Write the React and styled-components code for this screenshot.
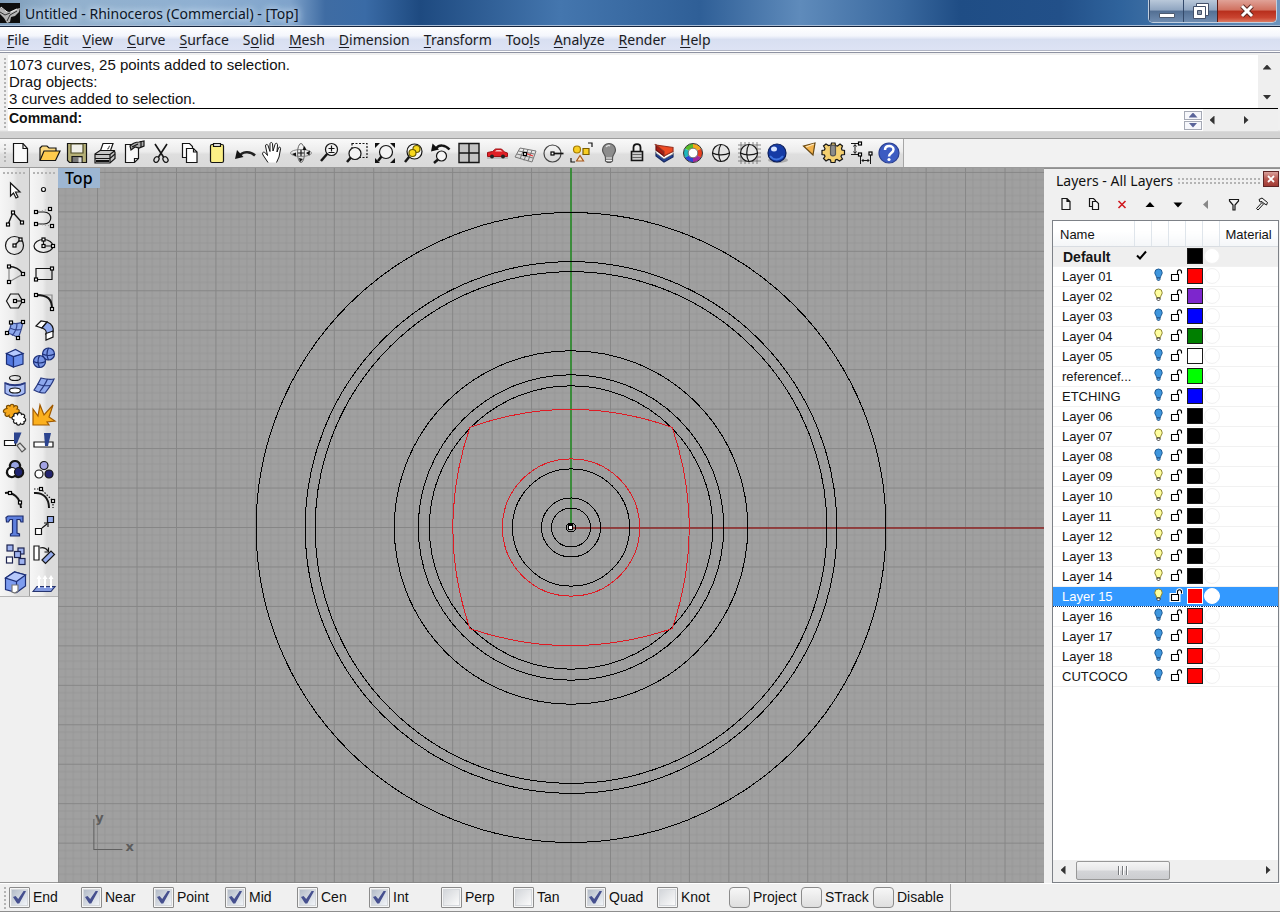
import React from "react"
import styled, { createGlobalStyle, css } from "styled-components";

const GlobalStyle = createGlobalStyle`
  * { box-sizing: border-box; }
  body {
    margin: 0;
    background: #f0f0f0;
    color: #111;
    font-family: "Liberation Sans", Arial, sans-serif;
    font-size: 14px;
  }
  button, input { font: inherit; color: inherit; }
  svg { display: block; }
`;

const ui = '"Noto Sans", "Segoe UI", sans-serif';

const Window = styled.div`
  display: flex;
  flex-direction: column;
  height: 100vh;
  min-height: 700px;
  overflow: hidden;
  border-bottom: 1px solid #8e8e8e;
`;

const TitleBar = styled.header`
  display: flex;
  align-items: flex-start;
  height: 27px;
  flex: none;
  padding-right: 3px;
  border-bottom: 1px solid #14233c;
  box-shadow: inset 0 -1px 0 #a9bdd6;
  background: linear-gradient(90deg, #7e9cb9 0, #93b1cd 60px, #8fb0d2 200px, #7fa3cb 290px, #3f6ca3 325px, #3a6ba6 365px, #1e4a80 420px, #4476ae 560px, #2f5f97 700px, #5f8bbb 800px, #3a699f 900px, #1f4d85 960px, #225089 1060px, #2f639c 1120px, #6d94bd 100%);
`;

const Title = styled.h1`
  margin: 0 0 0 5px;
  font: 400 14px/27px ${ui};
  color: #0b1526;
  text-shadow: 0 0 6px #dceaf7, 0 0 8px #c8dcf0;
`;

const WindowButtons = styled.div`
  display: flex;
  margin-left: auto;
  height: 23px;
  border: 1px solid #c2cfdf;
  border-top: 0;
  border-radius: 0 0 5px 5px;
  overflow: hidden;
`;

const WindowButton = styled.button`
  width: ${p => (p.$close ? 59 : 34)}px;
  padding: 0;
  border: 0;
  border-left: 1px solid ${p => (p.$close ? "#5b1a14" : "#33496a")};
  display: grid;
  place-items: center;
  background: ${p => p.$close
    ? "linear-gradient(#e0a297, #d0705f 46%, #b82e1c 50%, #c94430 80%, #dd7a62)"
    : "linear-gradient(#b9c8da, #8fa5c0 46%, #536f93 50%, #6f8cb0)"};
`;

const MenuBar = styled.nav`
  display: flex;
  gap: 14px;
  height: 26px;
  flex: none;
  padding-left: 7px;
  background: linear-gradient(#fff, #f4f6fc 35%, #d8dff1 50%, #dde3f4 90%, #e6ebf7);
  border-bottom: 1px solid #8f93a3;
  box-shadow: inset 0 -1px 0 #fff, inset 0 -2px 0 #b1b5c4;
`;

const MenuItem = styled.button`
  padding: 0;
  border: 0;
  background: none;
  font: 400 14px/24px ${ui};
  color: #1b1b22;
  u { text-underline-offset: 2px; }
`;

const CommandArea = styled.section`
  display: grid;
  grid-template-columns: 8px 1fr 22px;
  grid-template-rows: 53px 23px;
  flex: none;
  height: 86px;
  padding-top: 2px;
  background: linear-gradient(#f0f0f0 77px, #d3d3d3 79px);
  border-bottom: 1px solid #9c9c9c;
`;

const grip = css`
  background-image: radial-gradient(circle, #b4b4b4 0 1px, transparent 1px);
  background-size: 4px 4px;
`;

const SideGrip = styled.div`
  ${grip}
  width: 4px;
  margin: 2px 1px 2px 3px;
  align-self: stretch;
  ${p => p.$tall && "grid-row: 1 / 3;"}
`;

const History = styled.div`
  padding: 1px;
  background: #fff;
  font-size: 15px;
  line-height: 17px;
  overflow: hidden;
`;

const HistoryScroll = styled.div`
  display: flex;
  flex-direction: column;
  justify-content: space-between;
  padding: 6px 2px 5px 0;
  background: #efefef;
`;

const Arrow = styled.button`
  width: ${p => p.$w || 18}px;
  height: ${p => p.$h || 12}px;
  padding: 0;
  border: 0;
  background: none;
  display: grid;
  place-items: center;
  color: #333;
  &::before {
    content: "";
    width: ${p => (p.$dir === "up" || p.$dir === "down" ? 9 : 5)}px;
    height: ${p => (p.$dir === "up" || p.$dir === "down" ? 5 : 9)}px;
    background: currentColor;
    clip-path: ${p => ({
      up: "polygon(50% 0, 100% 100%, 0 100%)",
      down: "polygon(0 0, 100% 0, 50% 100%)",
      left: "polygon(100% 0, 100% 100%, 0 50%)",
      right: "polygon(0 0, 100% 50%, 0 100%)",
    }[p.$dir])};
  }
`;

const CommandLine = styled.div`
  grid-column: 2 / 4;
  display: flex;
  border-top: 1px solid #000;
  background: #fff;
  margin-right: 2px;
  label {
    padding: 0 4px 0 1px;
    font-weight: 700;
    line-height: 19px;
  }
  input {
    flex: 1;
    min-width: 0;
    border: 0;
    outline: 0;
    background: none;
  }
`;

const Spinner = styled.div`
  display: grid;
  align-content: center;
  gap: 1px;
  padding-right: 1px;
  ${Arrow} {
    border: 1px solid #a5a9b5;
    background: #f6f7fb;
    color: #5a649a;
  }
`;

const CommandScroll = styled.div`
  display: flex;
  align-items: center;
  gap: 16px;
  width: 75px;
  background: #efefef;
`;

const ToolRow = styled.div`
  display: flex;
  flex: none;
  height: 29px;
  background: #f2f2f2;
  border-bottom: 1px solid #9b9b9b;
`;

const Toolbar = styled.div`
  display: flex;
  border-right: 1px solid #a6a6a6;
  background: linear-gradient(#f9f9f9, #ececec 45%, #dedede 55%, #dadada);
`;

const ToolGrip = styled.div`
  ${grip}
  width: 4px;
  margin: 4px 0 3px 3px;
`;

const ToolButton = styled.button`
  width: 28px;
  height: 28px;
  padding: 0;
  border: 0;
  background: none;
  &:hover { background: #fff8; }
`;

const Workspace = styled.main`
  display: grid;
  grid-template-columns: 58px minmax(0, 1fr) 236px;
  flex: 1;
  min-height: 0;
`;

const Sidebar = styled.aside`
  border-bottom: 1px solid #999;
`;

const Palette = styled.div`
  display: grid;
  grid-template-columns: 30px 28px;
  border-bottom: 1px solid #b5b5b5;
`;

const PaletteColumn = styled.div`
  display: flex;
  flex-direction: column;
  align-items: center;
  border-right: ${p => (p.$first ? "1px solid #9d9d9d" : "0")};
  background: linear-gradient(90deg, #f6f6f6, #ececec 45%, #dcdcdc 60%, #dcdcdc);
`;

const TopGrip = styled.div`
  ${grip}
  align-self: stretch;
  height: 4px;
  margin: 3px 2px 1px;
`;

const Viewport = styled.section`
  position: relative;
  min-height: 0;
  overflow: hidden;
  background: #a0a0a0;
`;

const ViewportTitle = styled.h2`
  position: absolute;
  top: 0;
  left: 0;
  margin: 0;
  padding: 0 7px;
  font: 500 16px/20px ${ui};
  color: #000;
  background: #9db6d2;
`;

const Drawing = styled.svg`
  position: absolute;
  inset: 0;
  width: 100%;
  height: 100%;
  text { font: 700 13px "DejaVu Sans", sans-serif; fill: #5c5c5c; }
`;

const LayersPanel = styled.aside`
  display: flex;
  flex-direction: column;
  min-height: 0;
  padding: 2px 1px 0 8px;
  border-top: 1px solid #909090;
`;

const PanelHead = styled.div`
  display: flex;
  align-items: center;
  height: 19px;
  flex: none;
  h2 {
    margin: 0 4px;
    font: 400 14px/20px ${ui};
    white-space: nowrap;
  }
`;

const PanelGrip = styled.div`
  ${grip}
  flex: 1;
  height: 8px;
`;

const CloseButton = styled.button`
  display: grid;
  place-items: center;
  width: 16px;
  height: 16px;
  margin: 0 0 3px 2px;
  padding: 0;
  border: 1px solid #5e2424;
  background: linear-gradient(#d9a09b, #b85850 50%, #a03a34);
`;

const PanelTools = styled.div`
  display: flex;
  height: 30px;
  flex: none;
`;

const LayerList = styled.div`
  display: flex;
  flex-direction: column;
  flex: 1;
  min-height: 0;
  border: 1px solid #7d8187;
  background: #fff;
`;

const LayerTable = styled.table`
  width: 100%;
  table-layout: fixed;
  border-collapse: collapse;
  font-size: 13px;
  th {
    height: 25px;
    padding: 2px 0 0 7px;
    font-weight: 400;
    text-align: left;
    border-right: 1px solid #dfe5eb;
    border-bottom: 1px solid #d9dde2;
    background: linear-gradient(#fff 40%, #f4f6f8);
  }
  th:last-child { border-right: 0; padding-left: 6px; }
`;

const LayerRow = styled.tr`
  height: 20px;
  background: ${p => (p.$selected ? "#3399ff" : p.$current ? "#efefef" : "#fff")};
  color: ${p => (p.$selected ? "#fff" : "#151515")};
  td {
    height: 20px;
    padding: 0;
    border-bottom: 1px ${p => (p.$selected ? "dotted #10305c" : "solid #f1f1f1")};
  }
`;

const LayerName = styled.td`
  && {
    padding: 1px 0 0 ${p => (p.$bold ? 10 : 9)}px;
    font-size: ${p => (p.$bold ? 14 : 13)}px;
    font-weight: ${p => (p.$bold ? 700 : 400)};
    overflow: hidden;
    white-space: nowrap;
  }
`;

const Swatch = styled.span`
  display: block;
  width: 16px;
  height: 16px;
  margin-left: 2px;
  border: 1px solid ${p => (p.$selected ? "#fff" : "#1a1a1a")};
  background: ${p => p.$color};
`;

const MaterialDot = styled.span`
  display: block;
  width: 16px;
  height: 16px;
  margin-left: 2px;
  border: 1px solid ${p => (p.$selected ? "#fff" : "#f1f1f1")};
  border-radius: 50%;
  background: #fff;
`;

const HScroll = styled.div`
  display: flex;
  align-items: center;
  height: 22px;
  flex: none;
  margin-top: auto;
  padding: 0 1px 2px;
  background: #efefef;
`;

const Thumb = styled.div`
  display: flex;
  justify-content: center;
  align-items: center;
  gap: 2px;
  width: 94px;
  height: 19px;
  margin: 0 auto 0 4px;
  border: 1px solid #989898;
  border-radius: 2px;
  background: linear-gradient(#f5f5f5, #e8e8e9 48%, #d4d5d8 52%, #cccdd0);
  i {
    width: 2px;
    height: 9px;
    background: #77797d;
    border-right: 1px solid #fff;
  }
`;

const SnapBar = styled.footer`
  display: flex;
  height: 28px;
  flex: none;
  border-top: 1px solid #fff;
  background: #f0f0f0;
`;

const SnapGroup = styled.div`
  display: flex;
  padding: 0 5px 0 1px;
  border-right: 1px solid #a6a6a6;
`;

const Snap = styled.label`
  display: flex;
  align-items: center;
  gap: 3px;
  width: 72px;
  padding-bottom: 1px;
  white-space: nowrap;
`;

const SnapBox = styled.input`
  appearance: none;
  flex: none;
  display: grid;
  place-items: center;
  width: 21px;
  height: 21px;
  margin: 0;
  border: 1px solid #8b8b8b;
  border-radius: ${p => (p.$soft ? 4 : 1)}px;
  background: ${p => (p.$soft ? "linear-gradient(#f7f7f7, #dedede)" : "#f6f6f6")};
  &::before {
    content: "";
    grid-area: 1 / 1;
    width: 15px;
    height: 15px;
    border: 1px solid ${p => (p.$soft ? "transparent" : "#d5d8dc")};
    background: ${p => (p.$soft ? "none" : "linear-gradient(135deg, #d3d6da, #fbfbfb)")};
  }
  &:checked::before { background: linear-gradient(135deg, #b4bcc8, #f1f4f8); }
  &:checked::after {
    content: "";
    grid-area: 1 / 1;
    width: 13px;
    height: 13px;
    background: #46508f;
    clip-path: polygon(0 50%, 20% 42%, 40% 66%, 84% 0, 100% 6%, 48% 100%, 32% 100%);
  }
`;

const Icon = ({ children, size = 28 }) => (
  <svg width={size} height={size} viewBox={`0 0 ${size} ${size}`} fill="none" stroke="#151515" strokeWidth="1.2" aria-hidden="true">
    {children}
  </svg>
)

// little white handle used on most curve tools
const Pt = ({ x, y }) => <rect x={x - 1.5} y={y - 1.5} width="3" height="3" fill="#fff" stroke="#000" strokeWidth="1.2" />

const Lens = ({ x, y, r = 6, to = [6, 22], fill = "#f4f4f4" }) => (
  <>
    <path d={`M${x - r * 0.7} ${y + r * 0.7}L${to[0]} ${to[1]}`} strokeWidth="2.5" />
    <circle cx={x} cy={y} r={r} fill={fill} />
  </>
)

const topTools = [
  ["New", <><path d="M6.500 4.500H16l4.500 5V23.500H6.500z" fill="#fafafa" /><path d="M16 4.500v5h4.500" /></>],
  ["Open", <><path d="M5 21V9l2-2h5l2 2h7v4" fill="#fbd981" /><path d="M5 21.500l4-9.500h16l-4.500 9.500z" fill="#ffcb4d" /></>],
  ["Save", <><path d="M4.500 4.500h19v19H6.500l-2-2z" fill="#b5b077" /><path d="M8 5h12v9H8z" fill="#efefe8" stroke="#4f4c28" /><path d="M9 17.500h10v6H9z" fill="#777" /><path d="M15.500 18.500h3v5h-3z" fill="#ddd" stroke="none" /></>],
  ["Print", <><path d="M9 13l3-8.500h10L19 13z" fill="#fff" /><path d="M16 10c3 0 1-3 3-3" stroke="#555" /><path d="M4 15l5-3.500h14l1 2v6L19 24H4z" fill="#c6c6c6" /><path d="M4 15.500h15v8M19 15.500l5-4M4 19.500h15l5-4.500" /><path d="M5 22h13" stroke="#111" strokeWidth="2" /></>],
  ["Properties", <><path d="M6.500 5.500h13v14l-4 4h-9z" fill="#f7f7f7" /><path d="M19.500 19.500h-4v4" /><path d="M11 7c3-3 6-4 9-4l5-1v5l-5 2-4-1-4 3z" fill="#aaa" /><path d="M13 8l6-3M22 2v6" /></>],
  ["Cut", <><path d="M8 5l8.500 13M20 5l-8.500 13" strokeWidth="1.600" /><ellipse cx="9.500" cy="20.500" rx="2.300" ry="3" transform="rotate(35 9.500 20.500)" /><ellipse cx="18.500" cy="20.500" rx="2.300" ry="3" transform="rotate(-35 18.500 20.500)" /></>],
  ["Copy", <><path d="M7.500 4.500h7l3 3V18.500H7.500z" fill="#fff" /><path d="M11.500 9.500h7l3.500 3.500v10.500H11.500z" fill="#fff" /><path d="M18.500 9.500V13H22" /></>],
  ["Paste", <><rect x="7.500" y="5.500" width="13" height="18" rx="1.500" fill="#fbef86" /><path d="M10.500 7.500v-3h7v3z" fill="#ddd" /></>],
  ["Undo", <><path d="M8 17.500c3-5 11-6 16-1" stroke="#222" strokeWidth="2.500" /><path d="M4 20l2-9 6.500 7z" fill="#151515" stroke="none" /></>],
  ["Pan", <path d="M9 23.500L4 16c-1.500-3 1-3.500 2.500-2l2 2.500L6.500 7c0-2 2-2 2.500-.5l2 6V5c0-2 2.500-2 2.500 0l.500 7L16 5.500c.5-2 2.500-1.500 2.500.5l-.5 7 1.500-4c.5-1.500 2.500-1 2 1L20 18l-2.500 5.500" fill="#fff" strokeWidth="1" />],
  ["Rotate view", <><ellipse cx="14" cy="14" rx="10.500" ry="3.500" stroke="#888" strokeWidth="1" /><ellipse cx="14" cy="14" rx="3.500" ry="9.500" stroke="#666" strokeWidth="1" /><path d="M14 11v6M11 14h6" /><path d="M17.500 7l2 4h-4zM13 23l3-3-4-1zM19 14l4-2.500-.5 5zM9 17.500l-4-2.500 4-1.500z" fill="#111" stroke="none" /></>],
  ["Zoom", <><Lens x={16.500} y={10.500} /><path d="M13.500 9.500h6M16.500 6.500v6M13.500 13.500h6" /></>],
  ["Zoom window", <><path d="M9 4.500h15v14H9z" strokeDasharray="2 1.500" /><Lens x={12} y={14.500} to={[4, 23]} /></>],
  ["Zoom extents", <><Lens x={15} y={13} r={6.500} to={[7, 22]} /><path d="M4 4h5L4 9zM24 4v5l-5-5zM4 24v-5l5 5zM24 24h-5l5-5z" fill="#111" stroke="none" /></>],
  ["Zoom selected", <><Lens x={15.500} y={12.500} r={7.500} to={[6, 23]} /><circle cx="17.500" cy="10" r="3.500" fill="#f8d91d" stroke="#6b5c00" /><circle cx="13.500" cy="14" r="3.500" fill="#f8d91d" stroke="#6b5c00" /></>],
  ["Undo view", <><Lens x={14.500} y={17} r={5} to={[7, 24]} /><path d="M9 9.500c3-4 9-4 13.500 1" strokeWidth="2.500" /><path d="M4 12.500l1.500-8 6.500 6z" fill="#111" stroke="none" /></>],
  ["Four viewports", <><path d="M4 4.500h20v19H4z" fill="#c3c3c3" strokeWidth="1.400" /><path d="M14 4.500v19M4 14h20" strokeWidth="1.400" /></>],
  ["Set view", <><path d="M4 19h21" stroke="#aaa" /><path d="M4.500 17.500v-4l5-1 3-2.500h6l3 3 3 1v3.500z" fill="#e12026" stroke="#9d1015" strokeWidth="1" /><path d="M12 12.500l1.500-1.500h4l2 1.500z" fill="#f8c8c8" stroke="none" /><circle cx="9" cy="17.500" r="2" fill="#222" stroke="none" /><circle cx="20" cy="17.500" r="2" fill="#222" stroke="none" /></>],
  ["Construction plane", <><path d="M9 9l16 3-4 11-17-5zM13 9.800L9 20M17 10.500l-4 11M21 11.300l-4 10.900M7.500 12l16 3M6 15l16 4" stroke="#777" strokeWidth="1" /><path d="M14 14l8 3" stroke="#e33" /><Pt x={14} y={15} /></>],
  ["Object snap", <><circle cx="13.500" cy="14.500" r="8.500" stroke="#444" /><path d="M14 14.500h10.500" strokeWidth="1.700" /><Pt x={13.500} y={14.500} /></>],
  ["Select", <><circle cx="10" cy="10.500" r="3.500" fill="#f8ce22" stroke="#a47b00" /><path d="M16 9.500h6v6h-6z" fill="#f8ce22" stroke="#7a5c00" /><path d="M13 16.500l3.500 5.500h-7z" fill="#fbe3b8" stroke="#a5571d" /><path d="M21 4h4v4M4 19v4h4" /></>],
  ["Hide", <><path d="M14 4.500a6.500 6.500 0 0 1 6.500 6.500c0 3.500-3 4.500-3 8v3l-2 1.500h-3l-2-1.500v-3c0-3.500-3-4.500-3-8A6.500 6.500 0 0 1 14 4.500z" fill="#8d8d8d" stroke="#555" /><path d="M11 19h6M11 21.500h6" stroke="#eee" /><path d="M11 8c1-1.500 3-2 4-1" stroke="#ddd" /></>],
  ["Lock", <><path d="M10.500 13V8.500c0-4.500 7-4.500 7 0V13" strokeWidth="1.800" /><path d="M8.500 12.500h11v9h-11z" fill="#ccc" strokeWidth="1.600" /><path d="M9 15.500h10M9 18.500h10" stroke="#666" /></>],
  ["Layers", <><path d="M5 14l8 6 9-5v3l-9 5-8-6z" fill="#24449c" stroke="#182a60" /><path d="M5 11l8 6 9-5v3l-9 5-8-6z" fill="#fff" stroke="#888" strokeWidth=".8" /><path d="M5 6l8 6.500V17l-8-6z" fill="#a81c12" stroke="#611" /><path d="M5 6l17 2.500v4L13 17v-4.500z" fill="#ee4a22" stroke="#932" /></>],
  ["Object colour", <g strokeWidth="4.500"><path d="M14 7a7 7 0 0 1 6.100 3.500" stroke="#f4a71b" /><path d="M20.100 10.500a7 7 0 0 1 0 7" stroke="#e8401f" /><path d="M20.100 17.500A7 7 0 0 1 14 21" stroke="#a3289c" /><path d="M14 21a7 7 0 0 1-6.100-3.500" stroke="#2d48d4" /><path d="M7.900 17.500a7 7 0 0 1 0-7" stroke="#1eb7bd" /><path d="M7.900 10.500A7 7 0 0 1 14 7" stroke="#56bd2b" /><circle cx="14" cy="14" r="9.500" stroke="#333" strokeWidth="1" /><circle cx="14" cy="14" r="4.800" fill="#fff" stroke="#555" strokeWidth=".8" /></g>],
  ["Shade", <><circle cx="14" cy="14" r="8.500" fill="#e4e4e4" /><path d="M14 5.500c-3 4-3 13 0 17M5.500 14c4 2.500 13 2.500 17 0" /></>],
  ["Shade all", <><path d="M3 6h23M3 10h23M3 14h23M3 18h23M3 22h23M6 3v22M10 3v22M14 3v22M18 3v22M22 3v22" stroke="#6a6a6a" strokeWidth=".8" /><circle cx="14" cy="14" r="8.500" fill="#e4e4e4" /><path d="M14 5.500c-3 4-3 13 0 17M5.500 14c4 2.500 13 2.500 17 0" /></>],
  ["Render", <><ellipse cx="15" cy="21" rx="10" ry="3" fill="#aaa" stroke="none" /><circle cx="14" cy="14" r="9" fill="#153ba5" stroke="#0b1d5a" /><path d="M7 17c3 4 9 5 13 0" stroke="#3e74e0" strokeWidth="2" /><ellipse cx="11" cy="10" rx="3" ry="2.500" fill="#d7e4ff" stroke="none" /></>],
  ["Spotlight", <><path d="M12.500 7l11.500-3-2 12z" fill="#f3b34d" stroke="#6a4a14" /><path d="M15 8l8-3" stroke="#fde8bd" /></>],
  ["Options", <><path d="M12 6l.5-2h3.500l.5 2.500 2 .5 2.500-2 2.500 2-1 2.500.5 1.500 2.500.5v4l-3 .5-.5 1.500 1.500 2.500-3 2-2.500-1.500-1.500.5-.5 2.500h-4l-.5-2.500-2-.5-2.500 1.500-2.500-2.500 1.500-2-.5-1.500-2.500-.5v-4l2.500-.5.5-1.500-1.500-2.500 2.500-2 2.500 1.500z" fill="#f4d070" /><path d="M11.500 8c0-2.500 5-2.500 5 0v7c0 2.500-5 2.500-5 0z" fill="#8c8c8c" stroke="#555" /></>],
  ["Dimension", <><path d="M4 4.500h8M4 15.500h8M8 6v8M6.500 7.500L8 5.500l1.500 2M6.500 12.500L8 14.500l1.500-2M13.500 17v8M23.500 15v10M15 21.500h7M16.500 20L15 21.500l1.500 1.500M20.500 20l1.500 1.500-1.500 1.500" strokeWidth="1" /><Pt x={13} y={4.500} /><Pt x={13} y={15.500} /><Pt x={23.500} y={14.500} /></>],
  ["Help", <><circle cx="14" cy="14" r="10" fill="#3d5cc2" stroke="#2a3f92" /><path d="M10 11c0-5.500 8.500-5 8.500-.5 0 3.500-4.500 3.500-4.500 7" stroke="#fff" strokeWidth="2.500" /><circle cx="14" cy="20.500" r="1.600" fill="#fff" stroke="none" /></>],
]

const leftTools = [
  ["Pointer", <path d="M9.500 7v13l3-3 2.500 5 2-1-2.500-5H19z" fill="#fff" />],
  ["Polyline", <><path d="M7 20.500L12 8.500l9 10" strokeWidth="1.400" /><Pt x={7} y={20.500} /><Pt x={12} y={8.500} /><Pt x={21} y={18.500} /></>],
  ["Circle", <><circle cx="13.500" cy="13.500" r="9" /><path d="M13.500 13.500l6-6" /><Pt x={13.500} y={13.500} /><Pt x={19.500} y={7.500} /></>],
  ["Arc", <><path d="M8 6.500c6 0 11 3 14 7.500" strokeWidth="1.400" /><path d="M8 6.500V22l14-8" stroke="#888" /><Pt x={8} y={6.500} /><Pt x={8} y={22} /><Pt x={22} y={14} /></>],
  ["Polygon", <><path d="M5.500 13l4-7h8l4 7-4 7h-8z" /><path d="M14 13h8" /><Pt x={14} y={13} /><Pt x={22} y={13} /></>],
  ["Surface", <><path d="M10 6.500c4 2 8 1 12-.5-1 5-2 10-5 16-3-3-7-4-11-5 3-3 4-6 4-10.500z" fill="#8fa9ec" stroke="#34458e" /><path d="M16 7.500c0 5-2 9-5 12M9 12c4 2 7 2.500 11 1.500" stroke="#34458e" /><Pt x={10} y={6.500} /><Pt x={22} y={6} /><Pt x={17} y={22} /><Pt x={6} y={17} /></>],
  ["Box", <g stroke="#1c2f78"><path d="M5.500 9.500l7 3v10.500l-7-3z" fill="#4f75dd" /><path d="M12.500 12.500l9.500-3v10.500l-9.500 3z" fill="#6d92ee" /><path d="M5.500 9.500l9-4 7.500 4-9.500 3z" fill="#b6cbff" /></g>],
  ["Cylinder", <><ellipse cx="14" cy="6" rx="5.500" ry="2.500" /><path d="M4 11c5 3 15 3 20 0v10c-5 4-15 4-20 0z" fill="#a9bdf4" stroke="#27387f" /><path d="M4 11c5 3 15 3 20 0" stroke="#27387f" strokeWidth="2" /><ellipse cx="14" cy="18.500" rx="5.500" ry="2.500" fill="#fff" /></>],
  ["Boolean", <><path d="M6 8.500c-2-3 2-4 3-2 0-3 4-3 4 0 2-2 5 0 3 2.500 3 0 3 4 0 4 2 3-2 5-3.500 2.500 0 3-4.500 3-4.500 0-2 2-5 0-3.500-2.500-3 0-3-4 1.500-4.500z" fill="#f6a81c" stroke="#7a4c00" /><path d="M13 16c-1-3 2.500-3.500 3.500-1.500 1-3 4-2 4 0 2-1 4.500 1 2.500 3 2.500 1 2 4 0 4 1 3-2.500 3.500-3.500 2-1 2.500-4 2-4-.5-2 1-4-1-2.500-3-3-1-2.500-3.500 0-4z" fill="#fff" /></>],
  ["Trim", <><path d="M3.500 12.500h11v5h-11z" fill="#fff" /><path d="M16 17.500l3-2.500 5.500 6-3.500 3z" fill="#ddd" stroke="#555" /><path d="M13 4.500h7.500L16 15.500h-3z" fill="#2c448f" stroke="none" /></>],
  ["Group", <><circle cx="14" cy="9.500" r="4.500" fill="#98a4e4" /><circle cx="11" cy="16" r="4.500" fill="#fff" /><circle cx="18" cy="16" r="4.500" fill="#1f2470" /><path d="M14 5a5 5 0 0 1 5 6.500 5 5 0 1 1-5 8.500 5 5 0 1 1-5-8.500A5 5 0 0 1 14 5z" strokeWidth="2" /></>],
  ["Edit points", <><path d="M4 9c8-1 15 4 16 15" strokeWidth="2" /><Pt x={9} y={9} /><Pt x={19} y={18.500} /></>],
  ["Text", <path d="M5 5.500L7 4h15v6h-2l-1-2.500h-3V21l2.500 1v2h-9v-2l2-1V7.500H9L7.500 10H5.500z" fill="#5e7fdd" stroke="#1d2c6d" />],
  ["Array", <g fill="#9eb2ef" stroke="#1d2450"><rect x="6" y="5" width="6" height="6" /><rect x="17" y="8" width="6" height="6" /><rect x="13.500" y="11.500" width="6" height="6" /><rect x="5.500" y="17" width="6" height="6" fill="#fff" /><rect x="18" y="18.500" width="6" height="6" /></g>],
  ["Extract", <g stroke="#1c2f78"><path d="M4.500 10l9-6 11 3v11l-9 6.500-11-3z" fill="#7d9cef" /><path d="M4.500 10l9-6 11 3-9 6.500z" fill="#b7c9fb" /><path d="M15.500 13.500v11" /><path d="M11 17h6v6l-3 2-3-1z" fill="#fff" stroke="#777" /></g>],
]

const rightTools = [
  ["Point", <circle cx="13.500" cy="13.500" r="2" fill="#fff" />],
  ["Curve", <><path d="M6 8h8c9 0 9 12 0 12H6" /><path d="M6 8L20 5M6 20l16 2" stroke="#999" strokeDasharray="1 2" /><Pt x={6} y={8} /><Pt x={20} y={5} /><Pt x={6} y={20} /><Pt x={22} y={22} /></>],
  ["Ellipse", <><ellipse cx="13.500" cy="14" rx="9.500" ry="6.500" /><path d="M13.500 7.500V14H23" /><Pt x={13.500} y={14} /><Pt x={13.500} y={7.500} /><Pt x={23} y={14} /></>],
  ["Rectangle", <><path d="M6 8.500h16v11H6z" /><Pt x={6} y={19.500} /><Pt x={22} y={8.500} /></>],
  ["Fillet", <><path d="M6 7h16v14" stroke="#888" /><path d="M6 7c12 0 16 4 16 14" strokeWidth="2" /><Pt x={6} y={7} /><Pt x={22} y={21} /></>],
  ["Loft", <><path d="M6 10l5-5 6 1-5 6z" fill="#fff" /><path d="M12 12l5-6c5 2 7 5 6 10l-7 2c1-3-1-5-4-6z" fill="#8ea8ed" /><path d="M16 17.500l7-2.500v6l-7 3z" fill="#fff" /></>],
  ["Sphere", <g stroke="#1c2f78"><circle cx="18.500" cy="10" r="6" fill="#7895e5" /><path d="M12.500 10c4 2 8 2 12 0M18.500 4c-2 4-2 8 0 12" /><circle cx="9.500" cy="17.500" r="6" fill="#7895e5" /><path d="M3.500 17.500c4 2 8 2 12 0M9.500 11.500c-2 4-2 8 0 12" /></g>],
  ["Patch", <g stroke="#27387f"><path d="M11 6c4 1 8 2 13 1-2 5-5 9-9 14-4 0-8-1-11-3 3-4 5-8 7-12z" fill="#8ea8ed" /><path d="M17.500 7c-2 5-5 9-8 13M7.500 12c4 2 8 2 12.500 1.500" /></g>],
  ["Explode", <path d="M3 25V9l5 7 2-11 4 10 9-10-4 12 6 4-8 1 2 3z" fill="#fbb01e" stroke="#a05a00" />],
  ["Split", <><path d="M4 14h19v5H4z" fill="#fff" /><path d="M14 5h7l-3 13h-3z" fill="#2c448f" stroke="none" /></>],
  ["Ungroup", <><circle cx="14" cy="9.500" r="4" fill="#a3a3e4" /><circle cx="9" cy="18" r="4" fill="#fff" /><circle cx="19" cy="18" r="4" fill="#24246f" /></>],
  ["Control points", <><path d="M4 9c9-1 15 5 15 15" strokeWidth="2" /><path d="M4 5h7L23 17v7" strokeDasharray="1.500 1.500" /><Pt x={11} y={5} /><Pt x={23} y={17} /></>],
  ["Scale", <><path d="M5.500 16.500h6v6h-6z" fill="#fff" /><path d="M17.500 4.500h6v6h-6z" fill="#94abec" /><path d="M12 16l5-4M14 11h4v4" /></>],
  ["Orient", <><path d="M4 6h5v14H4z" fill="#fff" /><path d="M12 20l9-9 3.500 3.500-9 9z" fill="#94abec" /><path d="M10 8c4-1 6 0 8 3M18.500 7.500V12h-4" /></>],
  ["Extrude", <><path d="M3 23.500l4-5h18l-4 5z" fill="#8299df" stroke="#26346f" /><path d="M9 20V9M15 20V9M21 20V9" stroke="#fff" strokeWidth="2" /><path d="M6.500 11L9 7l2.500 4zM12.500 11L15 7l2.500 4zM18.500 11L21 7l2.500 4z" fill="#fff" stroke="none" /></>],
]

const panelTools = [
  ["New layer", <path d="M10 8.500h5l3 3v8h-8zM15 8.500v3h3" />],
  ["New sublayer", <><path d="M9.500 8.500h4l2 2v6h-6z" /><path d="M12.500 11.500h4l2 2v6h-6z" fill="#f5f5f5" /></>],
  ["Delete layer", <path d="M10.500 11l7 7M17.500 11l-7 7" stroke="#d0191f" strokeWidth="1.600" />],
  ["Move up", <path d="M14 12l4.500 5h-9z" fill="#000" stroke="none" />],
  ["Move down", <path d="M9.500 12.500h9L14 17.500z" fill="#000" stroke="none" />],
  ["Move out", <path d="M16 10v9l-5-4.500z" fill="#888" stroke="none" />],
  ["Filter", <path d="M9.500 9.500h9v1.500l-3.500 4v5h-2v-5l-3.500-4z" />],
  ["Tools", <path d="M8.500 18.500l5.500-6 1.500 1.500-5.500 6zM11 9.500l3-1.500 5.500 4.500-1 2.500-2.500-1.500-2-2-2 .5z" strokeWidth="1" />],
]

const layers = [
  ["Default", null, "#000"],
  ["Layer 01", 0, "#f00"],
  ["Layer 02", 1, "#7d26cd"],
  ["Layer 03", 0, "#00f"],
  ["Layer 04", 1, "#007f00"],
  ["Layer 05", 0, "#fff"],
  ["referencef...", 0, "#0f0"],
  ["ETCHING", 0, "#00f"],
  ["Layer 06", 0, "#000"],
  ["Layer 07", 1, "#000"],
  ["Layer 08", 0, "#000"],
  ["Layer 09", 1, "#000"],
  ["Layer 10", 1, "#000"],
  ["Layer 11", 1, "#000"],
  ["Layer 12", 1, "#000"],
  ["Layer 13", 1, "#000"],
  ["Layer 14", 1, "#000"],
  ["Layer 15", 1, "#f00"],
  ["Layer 16", 0, "#f00"],
  ["Layer 17", 0, "#f00"],
  ["Layer 18", 0, "#f00"],
  ["CUTCOCO", 0, "#f00"],
]

const menus = [
  ["", "F", "ile"], ["", "E", "dit"], ["", "V", "iew"], ["", "C", "urve"], ["", "S", "urface"],
  ["S", "o", "lid"], ["", "M", "esh"], ["", "D", "imension"], ["", "T", "ransform"],
  ["Too", "l", "s"], ["", "A", "nalyze"], ["", "R", "ender"], ["", "H", "elp"],
]

const snaps = [
  ["End", true], ["Near", true], ["Point", true], ["Mid", true], ["Cen", true], ["Int", true],
  ["Perp", false], ["Tan", false], ["Quad", true], ["Knot", false],
  ["Project", false], ["STrack", false], ["Disable", false],
]

const Bulb = ({ on }) => (
  <svg width="16" height="16" viewBox="0 0 16 16" aria-hidden="true">
    <path d="M7.500 1a3.700 3.700 0 0 1 3.700 3.700c0 2-1.700 2.500-1.700 5h-4c0-2.500-1.700-3-1.700-5A3.700 3.700 0 0 1 7.500 1z" fill={on ? "#ffffa0" : "#3f97de"} stroke={on ? "#8d8630" : "#1f5c96"} />
    <path d="M6 10v1.500L7.500 13 9 11.500V10z" fill={on ? "#fff" : "#5fa8e0"} stroke={on ? "#333" : "#24578a"} />
  </svg>
)

const Padlock = ({ selected }) => (
  <svg width="16" height="16" viewBox="0 0 16 16" fill="none" aria-hidden="true">
    {selected && <path d="M3 6.500h8v6H3zM9.500 6.500V4c0-3 4-3 4 0v2" stroke="#fff" strokeWidth="3" />}
    <path d="M3.500 6.500h7v6h-7zM9.500 6.500V4c0-3 4-3 4 0v1.500" stroke="#000" strokeWidth="1.100" fill={selected ? "#fff" : "none"} />
  </svg>
)

const Tools = ({ items }) => items.map(([name, art]) => (
  <ToolButton key={name} type="button" aria-label={name}><Icon>{art}</Icon></ToolButton>
))

function TopView() {
  return (
    <Viewport>
      <Drawing viewBox="58 168 986 714" preserveAspectRatio="xMidYMid slice" role="img" aria-label="Top viewport">
        <defs>
          <pattern id="grid" x="570.5" y="526.500" width="39.400" height="39.400" patternUnits="userSpaceOnUse">
            <path d="M7.880 0v39.400M15.760 0v39.400M23.640 0v39.400M31.520 0v39.400M0 7.880h39.400M0 15.760h39.400M0 23.640h39.400M0 31.520h39.400" stroke="#979797" strokeWidth="1" />
            <path d="M0 0v39.400M0 0h39.400" stroke="#868686" strokeWidth="2" />
          </pattern>
        </defs>
        <rect x="-500" y="-500" width="3000" height="3000" fill="url(#grid)" />
        <g fill="none" shapeRendering="crispEdges">
          <path d="M571 0V527" stroke="#258a25" strokeWidth="2" opacity=".8" />
          <path d="M571 527H2000" stroke="#8e2a2a" strokeWidth="2" opacity=".8" />
          {[315, 266, 256, 177, 153, 142, 59, 30, 20, 5].map(r => (
            <circle key={r} cx="571" cy="527" r={r - 0.5} stroke="#000" />
          ))}
          <circle cx="571" cy="527" r="68.500" stroke="#e01b24" />
          <path d="M470 427Q570 391 672 427Q706 527 672 628Q570 662 470 628Q436 527 470 427z" stroke="#e01b24" />
          <rect x="568.5" y="524.500" width="4" height="4" fill="#fff" stroke="#000" />
        </g>
        <path d="M94.500 818V848.500H123" fill="none" stroke="#606060" />
        <text x="96" y="821">y</text>
        <text x="126" y="850">x</text>
      </Drawing>
      <ViewportTitle>Top</ViewportTitle>
    </Viewport>
  )
}

function Layers() {
  return (
    <LayersPanel>
      <PanelHead>
        <h2>Layers - All Layers</h2>
        <PanelGrip />
        <CloseButton type="button" aria-label="Close panel">
          <svg width="8" height="8" viewBox="0 0 8 8"><path d="M1 1l6 6M7 1L1 7" stroke="#fff" strokeWidth="1.800" /></svg>
        </CloseButton>
      </PanelHead>
      <PanelTools><Tools items={panelTools} /></PanelTools>
      <LayerList>
        <LayerTable>
          <colgroup>
            <col style={{ width: 81 }} />
            <col style={{ width: 17 }} />
            <col style={{ width: 17 }} />
            <col style={{ width: 17 }} />
            <col style={{ width: 17 }} />
            <col style={{ width: 17 }} />
            <col />
          </colgroup>
          <thead>
            <tr><th>Name</th><th /><th /><th /><th /><th /><th>Material</th></tr>
          </thead>
          <tbody>
            {layers.map(([name, on, color]) => {
              const current = on === null
              const selected = name === "Layer 15"
              return (
                <LayerRow key={name} $current={current} $selected={selected}>
                  <LayerName $bold={current}>{name}</LayerName>
                  <td>{current && <svg width="16" height="16" viewBox="0 0 16 16"><path d="M3 7.500l3 3 6-7" fill="none" stroke="#000" strokeWidth="2" /></svg>}</td>
                  <td>{!current && <Bulb on={on} />}</td>
                  <td>{!current && <Padlock selected={selected} />}</td>
                  <td><Swatch $color={color} $selected={selected} /></td>
                  <td><MaterialDot $selected={selected} /></td>
                  <td />
                </LayerRow>
              )
            })}
          </tbody>
        </LayerTable>
        <HScroll>
          <Arrow type="button" $dir="left" aria-label="Scroll left" />
          <Thumb><i /><i /><i /></Thumb>
          <Arrow type="button" $dir="right" aria-label="Scroll right" />
        </HScroll>
      </LayerList>
    </LayersPanel>
  )
}

function App() {
  return (
    <Window>
      <GlobalStyle />
      <TitleBar>
        <svg width="20" height="24" viewBox="0 0 20 24" aria-hidden="true">
          <path d="M0 3h20v20H0z" fill="#0d0d0d" />
          <path d="M0 7l4 3 5 2 7-3 4-1-1 4-4 4-4 1-1 5-3 1-3-5-4-4z" fill="#b5b5b5" />
          <path d="M0 12l5 3 5-2M7 21l3-6 7-4" stroke="#333" fill="none" />
          <path d="M1 7l6 5M11 12l6-3" stroke="#eee" fill="none" />
        </svg>
        <Title>Untitled - Rhinoceros (Commercial) - [Top]</Title>
        <WindowButtons>
          <WindowButton type="button" aria-label="Minimize">
            <svg width="18" height="20" viewBox="0 0 18 20"><path d="M1.500 12.500h15v4h-15z" fill="#fff" stroke="#4d5b70" /></svg>
          </WindowButton>
          <WindowButton type="button" aria-label="Restore">
            <svg width="18" height="18" viewBox="0 0 18 18" stroke="#44516a"><path d="M4.500 1.500h12v12h-12z" fill="#fff" /><path d="M1.500 4.500h12v12h-12z" fill="#fff" /><path d="M5.500 8.500h4v4h-4z" fill="#8b98aa" /></svg>
          </WindowButton>
          <WindowButton type="button" $close aria-label="Close">
            <svg width="16" height="16" viewBox="0 0 16 16"><path d="M3 3l10 10M13 3L3 13" stroke="#5d2822" strokeWidth="5" /><path d="M3 3l10 10M13 3L3 13" stroke="#fff" strokeWidth="3" /></svg>
          </WindowButton>
        </WindowButtons>
      </TitleBar>

      <MenuBar>
        {menus.map(([pre, key, rest]) => (
          <MenuItem key={pre + key + rest} type="button">{pre}<u>{key}</u>{rest}</MenuItem>
        ))}
      </MenuBar>

      <CommandArea>
        <SideGrip $tall />
        <History>
          1073 curves, 25 points added to selection.<br />
          Drag objects:<br />
          3 curves added to selection.
        </History>
        <HistoryScroll>
          <Arrow type="button" $dir="up" aria-label="Scroll history up" />
          <Arrow type="button" $dir="down" aria-label="Scroll history down" />
        </HistoryScroll>
        <CommandLine>
          <label htmlFor="command">Command:</label>
          <input id="command" type="text" />
          <Spinner>
            <Arrow type="button" $dir="up" $h={9} aria-label="Previous command" />
            <Arrow type="button" $dir="down" $h={9} aria-label="Next command" />
          </Spinner>
          <CommandScroll>
            <Arrow type="button" $dir="left" aria-label="Scroll command left" />
            <Arrow type="button" $dir="right" aria-label="Scroll command right" />
          </CommandScroll>
        </CommandLine>
      </CommandArea>

      <ToolRow>
        <Toolbar>
          <ToolGrip />
          <Tools items={topTools} />
        </Toolbar>
      </ToolRow>

      <Workspace>
        <Sidebar>
          <Palette>
            <PaletteColumn $first><TopGrip /><Tools items={leftTools} /></PaletteColumn>
            <PaletteColumn><TopGrip /><Tools items={rightTools} /></PaletteColumn>
          </Palette>
        </Sidebar>
        <TopView />
        <Layers />
      </Workspace>

      <SnapBar>
        <SideGrip />
        <SnapGroup>
          {snaps.map(([name, on], i) => (
            <Snap key={name}>
              <SnapBox type="checkbox" defaultChecked={on} $soft={i > 9} />
              {name}
            </Snap>
          ))}
        </SnapGroup>
      </SnapBar>
    </Window>
  )
}

export default App;
